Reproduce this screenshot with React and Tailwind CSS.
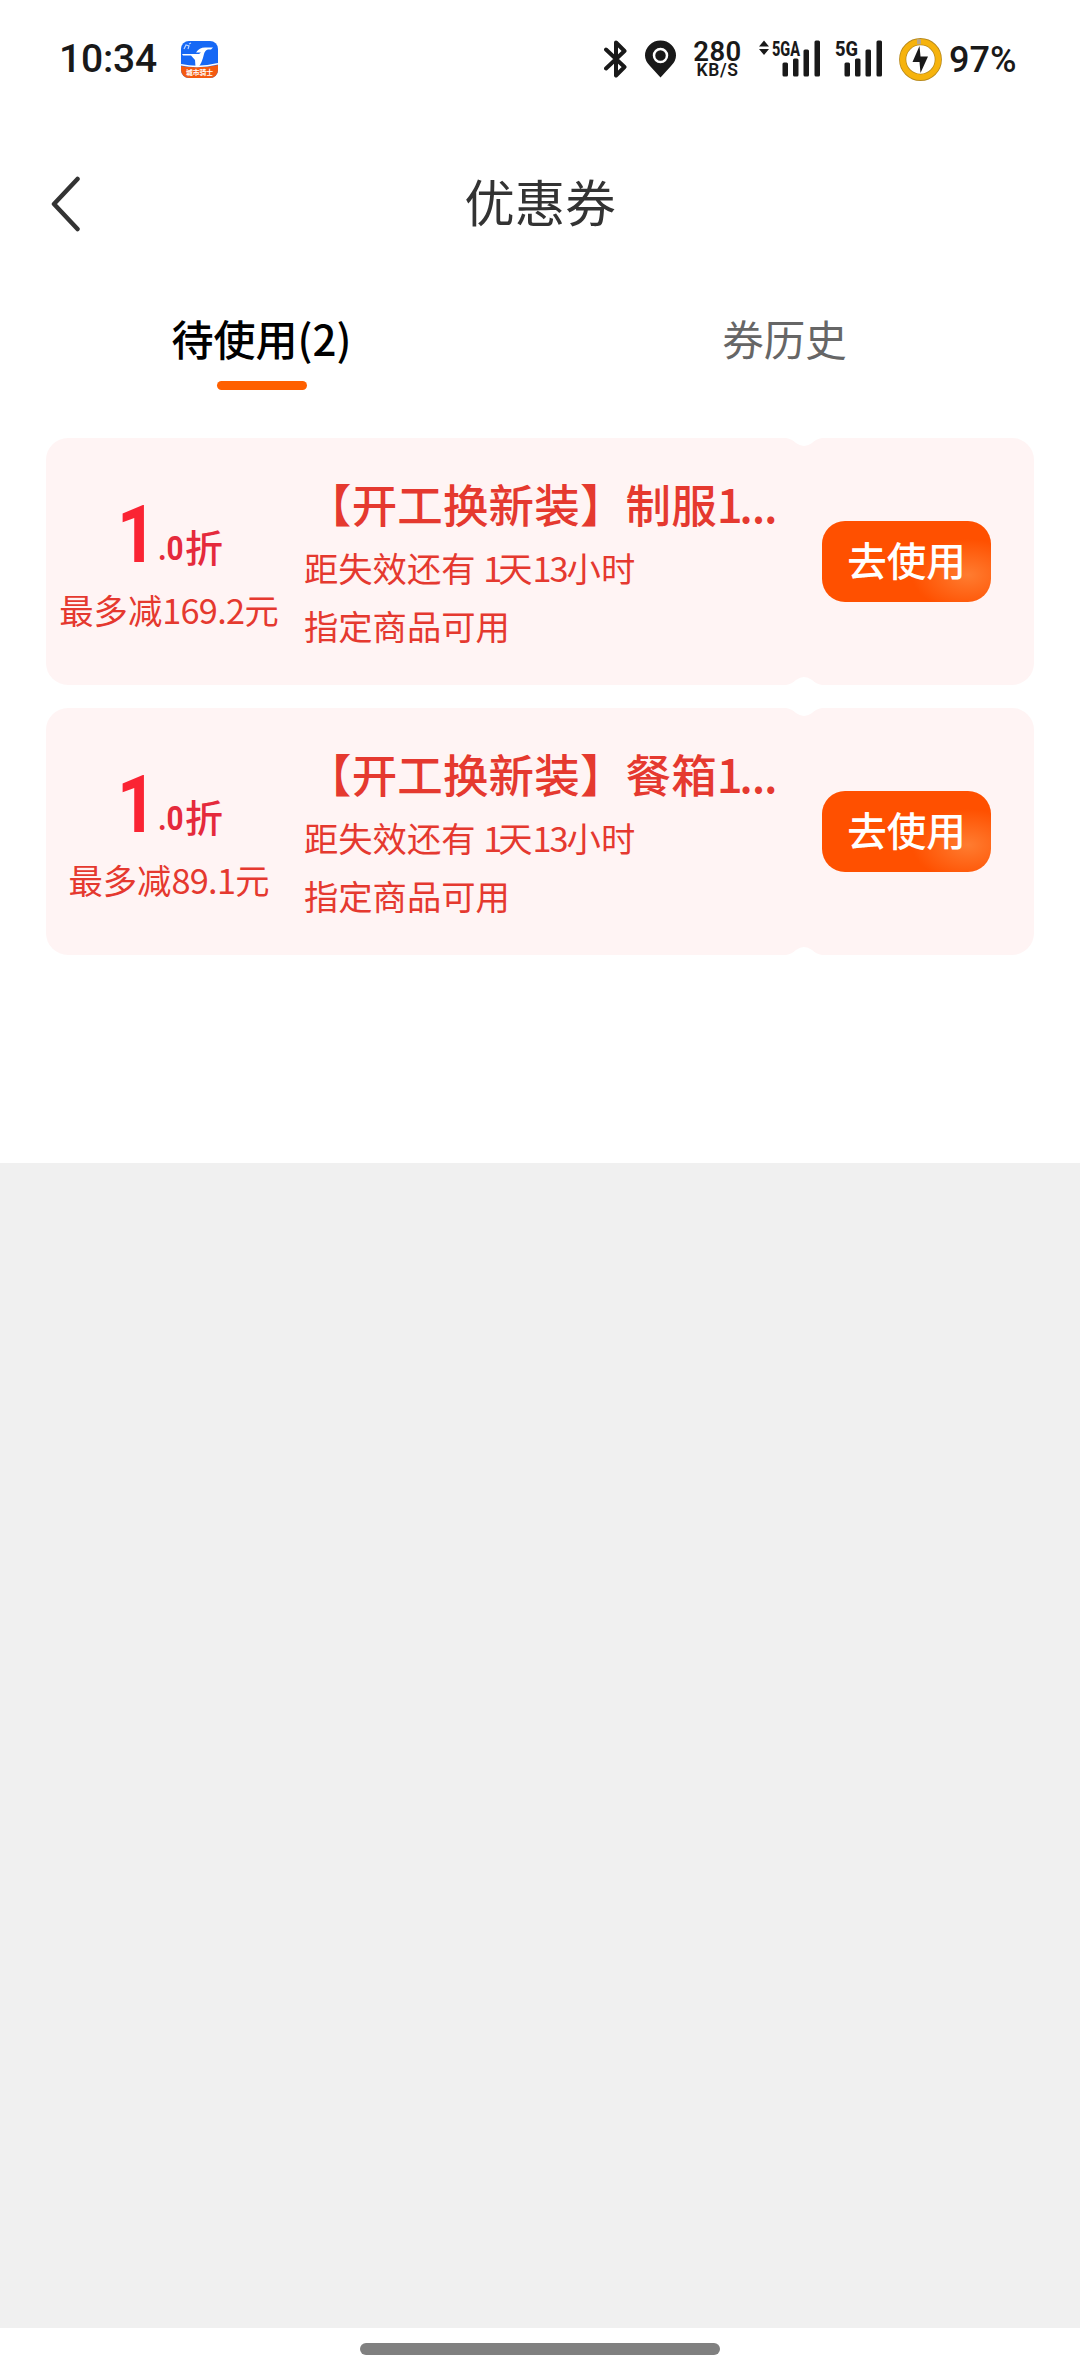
import { useState } from "react";

const coupons = [
    { id: 1, cut: "169.2", name: "【开工换新装】制服" },
    { id: 2, cut: "89.1", name: "【开工换新装】餐箱" },
];

function AppLogo() {
    return (
        <svg className="ml-[24px] w-[37px] h-[37px]" viewBox="0 0 37 37">
            <defs>
                <clipPath id="logo-clip">
                    <rect width="37" height="37" rx="8" />
                </clipPath>
            </defs>
            <g clipPath="url(#logo-clip)">
                <rect width="37" height="37" fill="#1668f5" />
                <path d="M0 25Q18 28 37 24V37H0Z" fill="#f45a10" />
                <path d="M0 23.800Q18 27.500 37 22.800" stroke="#fff" strokeWidth="1.600" fill="none" />
                <path d="M15 11.500C17.500 8 20 6.500 24 6.500H32L30 8.500H27Q24 9 23 13Q21 22 17.500 26H14.500L14 19L10 14.500H2L1 13H18L20 11.500Z" fill="#fff" />
                <path d="M3 8L5 4L8 5L7 8M8 3L10 2" stroke="#bcd6ff" strokeWidth="1.200" fill="none" />
                <text x="18.500" y="34.300" fontSize="6.800" fontWeight="700" fill="#fff" textAnchor="middle" fontFamily="'Noto Sans CJK SC', sans-serif">城市骑士</text>
            </g>
        </svg>
    );
}

function Signal({ label, width, arrows }) {
    return (
        <svg className="h-[38px] shrink-0 overflow-visible" width={width} height="38" viewBox={`0 0 ${width} 38`} fill="#191919">
            {arrows && <path d="M0 6.500L5 0.500L10 6.500ZM0 9L5 15L10 9Z" />}
            <text
                x={arrows ? 13 : 0}
                y="15.500"
                fontSize="21"
                fontWeight="800"
                textLength={arrows ? 28 : 23}
                lengthAdjust="spacingAndGlyphs"
                fontFamily="Roboto, sans-serif"
            >
                {label}
            </text>
            <rect x={width - 37.500} y="22.500" width="5.500" height="14" rx="1.500" />
            <rect x={width - 27} y="18.500" width="5.500" height="18" rx="1.500" />
            <rect x={width - 16.500} y="9.500" width="5.500" height="27" rx="1.500" />
            <rect x={width - 5.500} y="0.500" width="5.500" height="36" rx="1.500" />
        </svg>
    );
}

function StatusBar() {
    return (
        <div className="h-[118px] flex items-center pl-[59px] pr-[62px] text-[#191919] font-[Roboto,sans-serif] font-medium">
            <span className="w-[98px] text-[39px] leading-none tracking-[-0.2px]">10:34</span>
            <AppLogo />
            <div className="ml-auto flex items-center">
                <svg className="w-[24px] h-[38px]" viewBox="0 0 24 38" fill="none" stroke="#191919" strokeWidth="4" strokeLinejoin="round" strokeLinecap="round">
                    <path d="M2 9.500L20.500 27L12 35.500V2.500L20.500 11L2 28.500" />
                </svg>
                <svg className="ml-[17px] w-[31px] h-[38px]" viewBox="0 0 31 38">
                    <path d="M15.500 37.500L5 26Q0 21 0 15.500A15.500 15 0 0 1 31 15.500Q31 21 26 26Z" fill="#191919" />
                    <circle cx="15.500" cy="15.500" r="6.500" fill="#191919" stroke="#fff" strokeWidth="2.500" />
                </svg>
                <div className="ml-[16px] w-[51px] flex flex-col items-center">
                    <span className="text-[27.500px] leading-[22px] tracking-[0.500px] font-semibold">280</span>
                    <span className="text-[17.500px] leading-[15px] tracking-[0.600px] font-semibold">KB/S</span>
                </div>
                <div className="ml-[16px] flex">
                    <Signal label="5GA" width={61} arrows />
                </div>
                <div className="ml-[15px] flex">
                    <Signal label="5G" width={47} />
                </div>
                <svg className="ml-[17px] w-[43px] h-[43px]" viewBox="0 0 43 43">
                    <circle cx="21.500" cy="21.500" r="17.800" fill="#fff" stroke="#b98a1c" strokeWidth="7.200" />
                    <circle cx="21.500" cy="21.500" r="17.800" fill="none" stroke="#f6b30d" strokeWidth="5.600" />
                    <path d="M18 3.700H22" stroke="#b9a88a" strokeWidth="5" />
                    <path d="M20.500 8L13.500 24H20.500L21.500 35L29 18.500H21.500Z" fill="#191919" />
                </svg>
                <span className="ml-[7px] mt-[2px] w-[69px] text-[36px] leading-none whitespace-nowrap">97%</span>
            </div>
        </div>
    );
}

function CouponCard({ coupon }) {
    return (
        <div className="relative h-[247px] flex rounded-[22px] bg-[#fff4f4] text-[#e5392f] overflow-hidden">
            <div className="w-[246px] shrink-0 flex flex-col items-center">
                <div className="mt-[54px] h-[86px] w-full flex items-end pl-[71px] text-[#fa2433] whitespace-nowrap">
                    <span className="w-[41px] text-[79px] leading-[86px] font-bold font-[Roboto,sans-serif] origin-left scale-x-[0.87]">1</span>
                    <span className="w-[27px] text-[33px] leading-[59px] font-bold font-[Roboto,sans-serif] text-[#e52a3c] origin-left scale-x-90">.0</span>
                    <span className="text-[38px] leading-[64px] font-medium text-[#e52a3c]">折</span>
                </div>
                <div className="mt-[7px] text-[34.300px] leading-[48px] whitespace-nowrap">
                    最多减<span className="tracking-[-0.700px]">{coupon.cut}</span>元
                </div>
            </div>
            <div className="pl-[12px] flex-1 whitespace-nowrap">
                <div className="mt-[35px] pl-[2px] text-[45.500px] leading-[60px] font-medium tracking-[0.150px]">
                    {coupon.name}<span className="tracking-[-3.500px]">1</span><span className="tracking-[-1.200px]">...</span>
                </div>
                <div className="mt-[10px] text-[34.300px] leading-[48px]">
                    距失效还有 <span className="tracking-[-4px]">1</span>天<span className="tracking-[-2px]">13</span>小时
                </div>
                <div className="mt-[10px] text-[34.300px] leading-[48px]">指定商品可用</div>
            </div>
            <button className="mt-[83px] mr-[43px] pb-[6px] w-[169px] h-[81px] shrink-0 rounded-[23px] text-white text-[39.500px] font-medium bg-[radial-gradient(ellipse_56px_36px_at_146px_54px,#ff7c30,#ff5000)]">
                去使用
            </button>
            <svg className="absolute left-[740px] top-0 w-[36px] h-[9px]" viewBox="0 0 36 9" fill="#fff">
                <path d="M0 0Q6 1 10 5Q18 11 26 5Q30 1 36 0Z" />
            </svg>
            <svg className="absolute left-[740px] bottom-0 w-[36px] h-[9px]" viewBox="0 0 36 9" fill="#fff">
                <path d="M0 9Q6 8 10 4Q18 -2 26 4Q30 8 36 9Z" />
            </svg>
        </div>
    );
}

export default function App() {
    const [tab, setTab] = useState("unused");

    return (
        <div className="w-[1080px] h-[2376px] flex flex-col bg-[#f0f0f0] font-['Noto_Sans_CJK_SC',sans-serif]">
            <div className="h-[1163px] bg-white">
                <StatusBar />
                <div className="h-[172px] flex items-center justify-between pl-[50px] pr-[50px]">
                    <svg className="w-[32px] h-[56px]" viewBox="0 0 32 56" fill="none" stroke="#333" strokeWidth="4.500" strokeLinecap="round" strokeLinejoin="round">
                        <path d="M27.500 3L4 28L27.500 53" />
                    </svg>
                    <h1 className="pb-[8px] text-[50.500px] leading-none text-[#333]">优惠券</h1>
                    <div className="w-[32px]" />
                </div>
                <div className="h-[148px] flex pr-[34px]">
                    <button onClick={() => setTab("unused")} className="flex-1 flex flex-col items-center">
                        <span className="mt-[18px] text-[42px] leading-[60px] font-medium text-black">待使用(2)</span>
                        {tab === "unused" && <span className="mt-[13px] w-[90px] h-[9px] rounded-full bg-[#ff6000]" />}
                    </button>
                    <button onClick={() => setTab("history")} className="flex-1 flex flex-col items-center">
                        <span className="mt-[18px] text-[41.500px] leading-[60px] text-[#666]">券历史</span>
                        {tab === "history" && <span className="mt-[13px] w-[90px] h-[9px] rounded-full bg-[#ff6000]" />}
                    </button>
                </div>
                <div className="px-[46px] flex flex-col gap-[23px]">
                    {coupons.map((c) => (
                        <CouponCard key={c.id} coupon={c} />
                    ))}
                </div>
            </div>
            <div className="mt-auto h-[48px] bg-white flex justify-center">
                <div className="mt-[15px] w-[360px] h-[12px] rounded-full bg-[#808080]" />
            </div>
        </div>
    );
}
